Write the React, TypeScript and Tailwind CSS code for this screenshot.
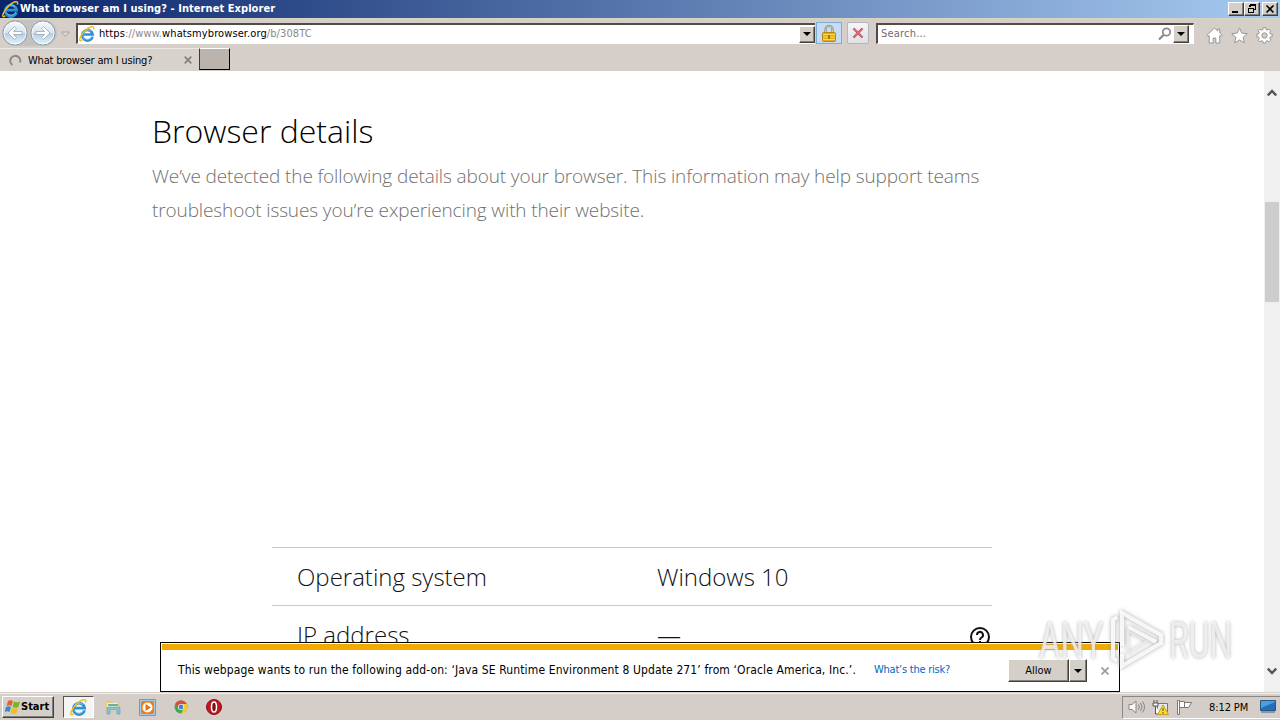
import type { ReactNode } from "react";

const bevel =
  "border border-t-white border-l-white border-r-[#404040] border-b-[#404040] bg-[#d4d0c8] shadow-[inset_-1px_-1px_0_#808080]";

const IeIcon = ({ size = 16 }: { size?: number }) => (
  <svg width={size} height={size} viewBox="0 0 16 16" fill="none" className="shrink-0">
    <path
      d="M13.600 10.600A5.300 5.300 0 1 1 13.700 8.500H4.600"
      stroke="#2c91d6"
      strokeWidth="2.600"
    />
    <path
      d="M12.900 10.600A5 5 0 0 1 4 10.800M4.200 6.400A5 5 0 0 1 12 5.200"
      stroke="#7bd0f6"
      strokeWidth="0.900"
    />
    <path
      d="M3.200 13.900C1.200 15.600.2 14.600 1 12.200 2.200 8.400 7.200 2.600 11.600 1c2.600-.9 3.800 0 2.800 2.400"
      stroke="#f3bd22"
      strokeWidth="1.400"
    />
  </svg>
);

const NavButton = ({ flip = false }: { flip?: boolean }) => (
  <svg
    width="26"
    height="26"
    viewBox="0 0 26 26"
    fill="none"
    className={flip ? "-scale-x-100" : ""}
  >
    <defs>
      <linearGradient id="orb" x1="0" y1="0" x2="0" y2="1">
        <stop offset="0" stopColor="#f7fafc" />
        <stop offset=".48" stopColor="#d7e3ee" />
        <stop offset=".52" stopColor="#b7cde0" />
        <stop offset="1" stopColor="#e5f5fc" />
      </linearGradient>
    </defs>
    <circle cx="13" cy="13" r="12" fill="url(#orb)" stroke="#8799a8" />
    <circle cx="13" cy="13" r="11" stroke="#fff" strokeOpacity=".8" />
    <path
      d="M12.500 6.500 6 13l6.500 6.500 2-2L11.500 14.500H20v-3h-8.500l3-3z"
      fill="#fff"
      stroke="#91a7b9"
      strokeWidth=".8"
    />
  </svg>
);

const DropArrow = () => (
  <svg width="8" height="4" viewBox="0 0 8 4">
    <path d="M0 0h8L4 4z" fill="#000" />
  </svg>
);

const WindowButton = ({ children }: { children: ReactNode }) => (
  <div className={`flex h-[14px] w-4 items-center justify-center ${bevel}`}>
    <svg width="12" height="10" viewBox="0 0 12 10" fill="none" stroke="#000" shapeRendering="crispEdges">
      {children}
    </svg>
  </div>
);

const TitleBar = () => (
  <div className="flex h-[18px] items-center bg-linear-to-r/srgb from-[#0a246a] to-[#a6caf0] pr-[2px] pl-[2px]">
    <IeIcon size={17} />
    <span className="mt-px ml-px text-[11px] font-bold tracking-[0.065px] whitespace-nowrap text-white">
      What browser am I using? - Internet Explorer
    </span>
    <div className="ml-auto flex">
      <WindowButton>
        <path d="M2 8h6" strokeWidth="2" />
      </WindowButton>
      <WindowButton>
        <path d="M4 1h6M4 1v2M9.500 1v4.500H8M2 4.500h6M2.500 4v4.500h5V4" strokeWidth="1.300" />
      </WindowButton>
      <div className="w-[2px]" />
      <WindowButton>
        <path d="m2.500 1.500 7 7m0-7-7 7" strokeWidth="1.700" shapeRendering="auto" />
      </WindowButton>
    </div>
  </div>
);

const field =
  "flex h-[21px] items-center border-t-2 border-l-2 border-t-[#504c48] border-l-[#504c48] border-b border-b-white bg-white";

const Toolbar = () => (
  <div className="flex h-[30px] items-start border-t border-[#d8d5c4] pt-[3px]">
    <div className="-mt-[2px] ml-[2px] flex h-[26px] w-[55px] rounded-full bg-[#c3c2c1]">
      <NavButton />
      <div className="ml-[2px]">
        <NavButton flip />
      </div>
    </div>
    <svg width="9" height="7" viewBox="0 0 9 7" fill="none" className="mt-[9px] ml-[4px]">
      <path d="M.5 1h8l-4 4.500z" fill="#ddd9d5" stroke="#aba49e" />
    </svg>
    <div className={`mt-px ml-[6px] w-[739px] pl-[1px] ${field}`}>
      <IeIcon size={16} />
      <span className="mt-px ml-[4px] text-[11px] tracking-[0.1px] whitespace-nowrap text-[#888]">
        <span className="text-black">https</span>://www.
        <span className="text-black">whatsmybrowser.org</span>/b/308TC
      </span>
      <div className={`ml-auto flex h-[17px] w-4 items-center justify-center ${bevel}`}>
        <DropArrow />
      </div>
    </div>
    <div className="ml-px flex h-[22px] w-[26px] items-center justify-center border border-[#7eabd8] bg-[#c5dcf7]">
      <svg width="14" height="17" viewBox="0 0 14 17" fill="none">
        <path d="M3.500 8V4.500a3.500 3.500 0 0 1 7 0V8" stroke="#8a8a68" strokeWidth="2.200" />
        <path d="M3.500 8V4.500a3.500 3.500 0 0 1 7 0V8" stroke="#ddd9ad" strokeWidth=".8" />
        <rect x=".5" y="7.500" width="13" height="9" rx="1" fill="#e6ac16" stroke="#b98616" />
        <path d="M1 9.500h12M1 12h12M1 14.500h12" stroke="#ffdb4b" />
        <path d="M7 10v4" stroke="#876414" strokeWidth="1.500" />
      </svg>
    </div>
    <div className="ml-[5px] flex h-[22px] w-[22px] items-center justify-center rounded-[2px] border border-[#b3b6bd] bg-linear-to-b from-[#f5f5f6] to-[#dfe1e6]">
      <svg width="12" height="12" viewBox="0 0 12 12">
        <path d="m1.500 1.500 9 9m0-9-9 9" stroke="#a4545d" strokeWidth="2.300" />
        <path d="m1.500 1.500 9 9m0-9-9 9" stroke="#e46f75" strokeWidth="1.100" />
      </svg>
    </div>
    <div className={`mt-px ml-[7px] w-[318px] border-r border-r-white pl-[3px] ${field}`}>
      <span className="mt-px text-[11px] tracking-[0.2px] text-[#6d6d6d]">Search...</span>
      <svg width="14" height="14" viewBox="0 0 14 14" fill="none" className="ml-auto">
        <circle cx="8.500" cy="5" r="3.700" stroke="#888" strokeWidth="1.700" />
        <path d="M5.800 7.800 1 12.500" stroke="#888" strokeWidth="2.200" />
      </svg>
      <div className={`mr-1 ml-px flex h-[18px] w-4 items-center justify-center ${bevel}`}>
        <DropArrow />
      </div>
    </div>
    <div className="mt-[5px] ml-[12px] flex gap-2 text-[#969696]">
      <svg width="17" height="17" viewBox="0 0 17 17" fill="#fff" stroke="currentColor">
        <path d="M8.500 1 .8 8.200l1.100 1.300 1.300-1V16h4v-5h2.600v5h4V8.500l1.300 1 1.100-1.300-2.400-2.300V2h-2v2z" />
      </svg>
      <svg width="17" height="17" viewBox="0 0 17 17" fill="#fff" stroke="currentColor">
        <path d="m8.500.9 2.200 5.200 5.600.5-4.200 3.700 1.200 5.600-4.800-2.900-4.800 2.900 1.200-5.600L.7 6.600l5.600-.5z" />
      </svg>
      <svg width="17" height="17" viewBox="0 0 17 17" fill="#fff" stroke="currentColor">
        <path d="M7.300.7h2.400l.4 2 1.300.5 1.700-1.100 1.700 1.700-1.100 1.700.5 1.300 2 .4v2.500l-2 .4-.5 1.300 1.100 1.700-1.700 1.700-1.700-1.100-1.300.5-.4 2H7.300l-.4-2-1.300-.5-1.700 1.100-1.700-1.700 1.100-1.700-.5-1.300-2-.4V7.200l2-.4.500-1.300-1.100-1.700 1.700-1.700 1.700 1.100 1.300-.5z" />
        <circle cx="8.500" cy="8.500" r="2.700" fill="#d6cfc9" />
      </svg>
    </div>
  </div>
);

const TabBar = () => (
  <div className="flex h-[23px] items-start">
    <div className="flex h-[23px] w-[199px] items-center border-t border-[#ebe8e5] bg-[#d8d2cd] pl-[9px]">
      <svg width="13" height="13" viewBox="0 0 13 13" fill="none">
        <path d="M3.500 11A5 5 0 1 1 11 8.500" stroke="#8b8987" strokeWidth="2" />
      </svg>
      <span className="mt-[2px] ml-[6px] text-[11px] tracking-[-0.19px] whitespace-nowrap">What browser am I using?</span>
      <svg width="8" height="8" viewBox="0 0 8 8" className="mr-[7px] ml-auto">
        <path d="m.7.7 6.600 6.600m0-6.600L.7 7.300" stroke="#86817e" strokeWidth="1.700" />
      </svg>
    </div>
    <div className="h-[22px] w-[31px] border border-t-white border-r-black border-b-black border-l-[#3c3c3c] bg-[#bbb3ae]" />
  </div>
);

const details = [
  { label: "Operating system", value: "Windows 10", help: false },
  { label: "IP address", value: "—", help: true },
];

const Page = () => (
  <main className="h-full flex-1 overflow-hidden bg-white pt-[38px] pl-[152px] font-['Open_Sans',sans-serif] font-light">
    <h1 className="h-[50px] text-[32px] leading-[44px]">Browser details</h1>
    <p className="h-[388px] text-[19px] leading-[34px] tracking-[-0.12px] text-[#707070]">
      We’ve detected the following details about your browser. This information may help support teams
      <br />
      troubleshoot issues you’re experiencing with their website.
    </p>
    <div className="ml-[120px] w-[720px]">
      {details.map((row) => (
        <div
          key={row.label}
          className="flex h-[58px] items-center border-t border-[#c9c9c9] px-[25px] text-[24px] text-[#111]"
        >
          <span className="w-[360px]">{row.label}</span>
          <span>{row.value}</span>
          {row.help && (
            <svg width="20" height="20" viewBox="0 0 20 20" fill="none" stroke="#111" strokeWidth="2" className="mt-1 -mr-[23px] ml-auto">
              <circle cx="10" cy="10" r="9" />
              <path d="M7 8a3 3 0 1 1 4.500 2.500C10.300 11.300 10 11.500 10 13m0 1v2" />
            </svg>
          )}
        </div>
      ))}
    </div>
  </main>
);

const ScrollBar = () => (
  <div className="flex w-4 flex-col items-center bg-[#f0f0f0] pt-[18px]">
    <svg width="10" height="8" viewBox="0 0 10 8" fill="none">
      <path d="m.8 6.500L5 2l4.200 4.500" stroke="#555" strokeWidth="2.400" />
    </svg>
    <div className="mt-[105px] h-[100px] w-[14px] bg-[#cdcdcd]" />
    <svg width="10" height="8" viewBox="0 0 10 8" fill="none" className="mt-auto mb-[17px]">
      <path d="M.8 1.500 5 6l4.200-4.500" stroke="#555" strokeWidth="2.400" />
    </svg>
  </div>
);

const Notification = () => (
  <div className="absolute bottom-0 left-[160px] h-[50px] w-[960px] border border-black bg-white p-px">
    <div className="h-[6px] bg-[#f2aa00]" />
    <div className="flex h-[40px] items-center pl-4 text-[11px]">
      <span className="w-[696px] text-[12px] tracking-[0.12px] whitespace-nowrap">
        This webpage wants to run the following add-on: ‘Java SE Runtime Environment 8 Update 271’ from ‘Oracle America, Inc.’.
      </span>
      <span className="mt-px w-[134px] tracking-[-0.24px] whitespace-nowrap text-[#0066bf]">What’s the risk?</span>
      <div className={`mt-px flex h-[23px] w-[61px] items-center justify-center pt-px ${bevel}`}>Allow</div>
      <div className={`mt-px flex h-[23px] w-[18px] items-center justify-center ${bevel}`}>
        <DropArrow />
      </div>
      <svg width="8" height="8" viewBox="0 0 8 8" className="mt-[2px] ml-[14px]">
        <path d="m.5.5 7 7m0-7-7 7" stroke="#999" strokeWidth="1.600" />
      </svg>
    </div>
  </div>
);

const Watermark = () => (
  <div className="absolute right-[47px] bottom-[18px] flex h-[66px] w-[194px] items-center justify-between font-['Roboto',sans-serif] text-[50px] leading-none text-white/70 [text-shadow:0_0_4px_#aaa]">
    <span className="w-[66px] origin-left scale-x-[0.66]">ANY</span>
    <svg width="58" height="66" viewBox="0 0 58 66" fill="none" className="absolute left-[68px] drop-shadow-[0_0_2px_#999]">
      <path
        d="M10 9 6 12v38l4 3M15 38V5l39 22v8L15 58V46M21 19l28 15"
        stroke="#fff"
        strokeOpacity=".85"
        strokeWidth="4"
      />
      <path d="M21 23v22l19-12z" stroke="#eee" strokeOpacity=".7" strokeWidth="2" />
    </svg>
    <span className="w-[64px] origin-left scale-x-[0.64]">RUN</span>
  </div>
);

const Taskbar = () => (
  <div className="flex h-[27px] items-center border-t border-[#f2f0ed] bg-[#d5cec8] pl-[2px]">
    <div className={`flex h-[22px] w-[52px] items-center pl-[2px] text-[11px] font-bold ${bevel}`}>
      <svg width="16" height="16" viewBox="0 0 16 16">
        <path d="M3 2q2-1.500 5 0L6.500 7Q4 5.500 1.500 7z" fill="#ed5d26" />
        <path d="M9 2.500q3 1.500 6 0L13.500 8q-3 1.500-6 0z" fill="#73b536" />
        <path d="M1 8q3-1.500 5 0l-1.500 5Q2 11.500-.5 13z" fill="#3989cb" />
        <path d="M7 8.800q3 1.500 6 0l-1.500 5.500q-3 1.500-6 0z" fill="#f2bc23" />
      </svg>
      <span className="mt-px">Start</span>
    </div>
    <div className="ml-[9px] flex h-[22px] w-[31px] items-center justify-center border border-t-[#555] border-r-white border-b-white border-l-[#555] bg-[#f5f4f2]">
      <IeIcon size={17} />
    </div>
    <svg width="17" height="17" viewBox="0 0 17 17" className="ml-[11px]">
      <path d="M1 2h6l1 2h7v9H1z" fill="#e9c978" />
      <path d="M2 4h11v8H2z" fill="#fff0b2" />
      <path d="M3 5h10v2H3z" fill="#65b4a1" />
      <path d="M2 15V9q0-1 1-1h11q1 0 1 1v6h-3v-4H5v4z" fill="#88bedb" stroke="#5c9cc2" strokeWidth=".6" />
    </svg>
    <svg width="17" height="17" viewBox="0 0 17 17" className="ml-[17px]">
      <path d="M.5.500h16v16H.5z" fill="#a2caeb" stroke="#689cc7" />
      <rect x="2" y="2" width="13" height="13" rx="2" fill="#f07d12" />
      <circle cx="8.500" cy="8.500" r="5" fill="#fff" />
      <path d="m6.500 5 5.500 3.500L6.500 12z" fill="#e57311" />
    </svg>
    <svg width="14" height="14" viewBox="0 0 14 14" className="ml-[18px]">
      <circle cx="7" cy="7" r="6.500" fill="#43a54d" />
      <path d="M1.400 3.600A6.500 6.500 0 0 1 12.700 4H7L4 8z" fill="#de4b3c" />
      <path d="M12.700 4A6.500 6.500 0 0 1 7 13.500L10 8 7 4z" fill="#f6c936" />
      <circle cx="7" cy="7" r="3" fill="#fff" />
      <circle cx="7" cy="7" r="2.400" fill="#4384ce" />
    </svg>
    <svg width="16" height="16" viewBox="0 0 16 16" className="ml-[18px]">
      <circle cx="8" cy="8" r="7.500" fill="#bd1820" stroke="#8e1119" />
      <ellipse cx="8" cy="8" rx="2.500" ry="5" fill="#78131a" stroke="#fff" strokeWidth="1.500" />
    </svg>
    <div className="ml-auto flex h-[23px] w-[158px] items-center border-t border-b border-l border-t-[#888] border-b-white border-l-[#888] pl-[5px]">
      <svg width="18" height="16" viewBox="0 0 18 16" fill="#f7f7f7" stroke="#858585">
        <path d="M1 5.500h3L8 2v12l-4-3.500H1z" />
        <path d="M10.500 5.500q1.500 2.500 0 5M12.500 4q3 4 0 8M14.500 2.500q4 5.500 0 11" fill="none" />
      </svg>
      <svg width="18" height="17" viewBox="0 0 18 17" fill="none" className="ml-[6px]">
        <path d="M5.500 4.500h10v8h-10z" fill="#e4e8eb" stroke="#777" />
        <path d="M2 1v3m3-3v3M1 4h5v3H1zm2.500 3v8h6" fill="#fff" stroke="#555" />
        <path d="m11 6 5.500 9.500h-11z" fill="#ffdd25" stroke="#c2a021" />
        <path d="M11 9v3m0 1v1.500" stroke="#444" />
      </svg>
      <svg width="17" height="16" viewBox="0 0 17 16" fill="#fff" stroke="#797979" className="ml-[6px]">
        <path d="M1.500 1.500h2v14h-2zM3.500 2.500h5v6h-5zM8.500 3.500h7l-3 5h-4z" />
      </svg>
      <span className="mt-[2px] ml-[16px] text-[11px] tracking-[-0.1px] whitespace-nowrap">8:12 PM</span>
      <svg width="16" height="14" viewBox="0 0 16 14" className="mr-1 ml-auto">
        <path d="M.5.500h15v10H.5z" fill="#246fb8" stroke="#285780" />
        <path d="M1 8 15 2V1H1z" fill="#4b9ee0" />
        <path d="M1 12h14" stroke="#6a879e" strokeWidth="1.500" />
      </svg>
    </div>
  </div>
);

export default function App() {
  return (
    <div className="flex h-[720px] w-[1280px] flex-col overflow-hidden bg-[#d6cfc9] font-['DejaVu_Sans_Condensed','DejaVu_Sans',sans-serif] text-black">
      <TitleBar />
      <Toolbar />
      <TabBar />
      <div className="relative flex h-[621px]">
        <Page />
        <ScrollBar />
        <Notification />
        <Watermark />
      </div>
      <div className="h-px bg-[#d6cfc9]" />
      <Taskbar />
    </div>
  );
}
